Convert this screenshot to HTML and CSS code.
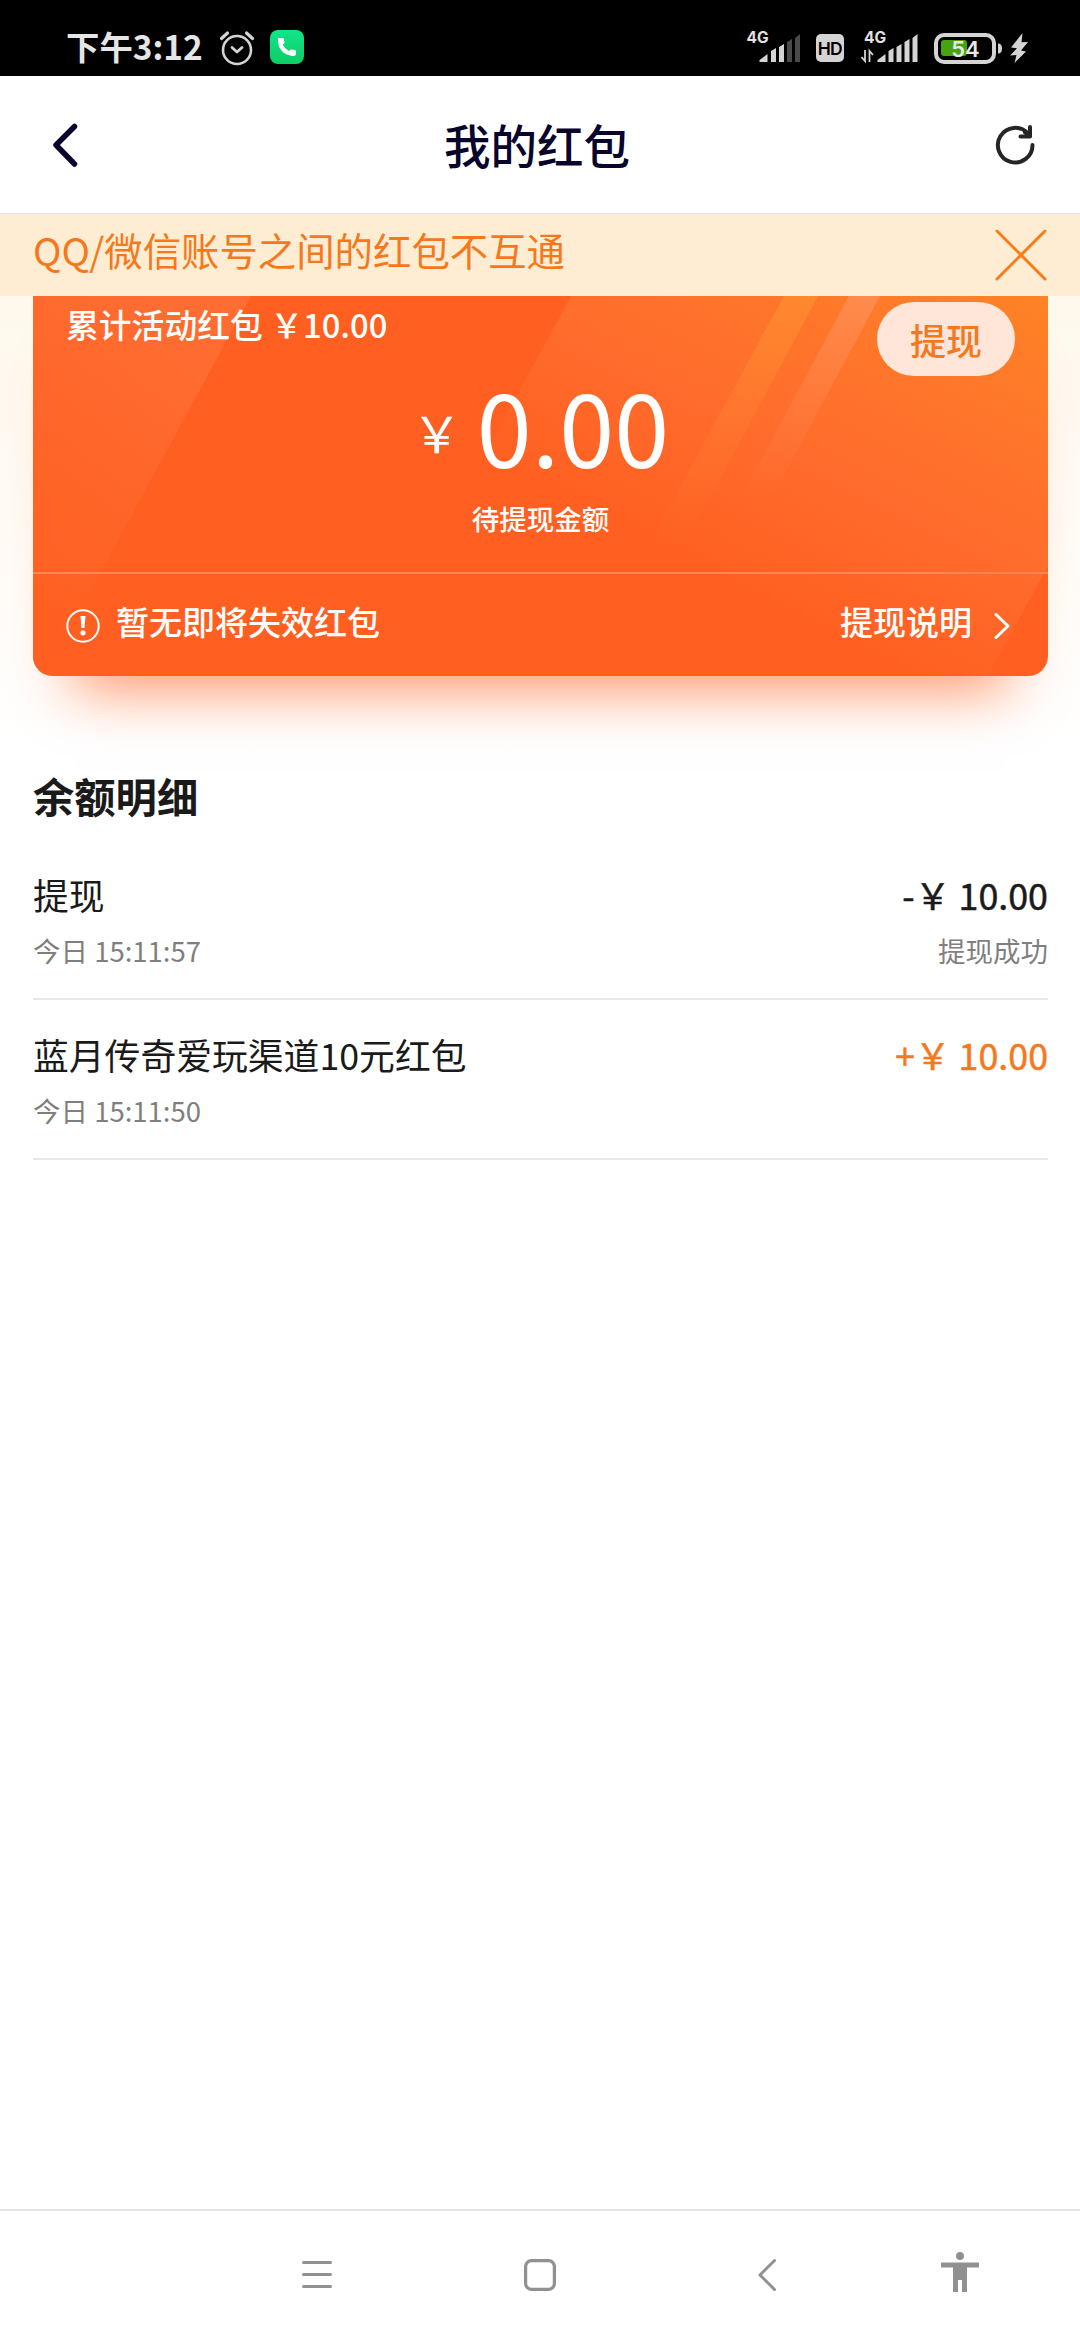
FILE: index.html
```html
<!DOCTYPE html>
<html lang="zh-CN">
<head>
<meta charset="utf-8">
<title>我的红包</title>
<link rel="stylesheet" href="styles.css">
</head>
<body>
<div class="screen">
  <div class="status">
    <span class="clock">下午3:12</span>
    <svg class="alarm" width="36" height="36" viewBox="0 0 36 36" fill="none" stroke="#d4d4d4" stroke-linecap="round"><circle cx="18" cy="20" r="14" stroke-width="2.6"/><path d="M2.5 8.5 8.5 3M33.500 8.500 27.500 3" stroke-width="3.200"/><path d="M13 17.500 18 22 23 17.500" stroke-width="2.800" stroke-linejoin="round"/></svg>
    <svg class="call" width="34" height="34" viewBox="0 0 34 34"><defs><linearGradient id="g" x2="0" y2="1"><stop stop-color="#12e58a"/><stop offset="1" stop-color="#0ccd63"/></linearGradient></defs><rect width="34" height="34" rx="8" fill="url(#g)"/><path d="M8 8h5.500q.8 2.500 1 5l-1.800 1.500q2 4.500 6.300 6.500l1.800-1.500q3 0 5.200 1v4q-1 1.700-3.500 1.500C13 25 8 18 8 11z" fill="#fff"/></svg>
    <div class="system">
      <svg width="54" height="34" viewBox="0 0 54 34" fill="#d4d4d4"><text x="0.5" y="14" class="net">4G</text><path d="M13.500 33v-2l8-6v8zM25 33V22l5-3v14zM33 33V18l5-3v18z"/><path d="M41 33V13l5-3v23zM49 33V9l5-4v28z" fill="#4a4a4a"/></svg>
      <svg class="hd" width="28" height="28" viewBox="0 0 28 28"><rect width="28" height="28" rx="5" fill="#d4d4d4"/><text x="13.700" y="20.800" class="hd-text">HD</text></svg>
      <svg class="net2" width="58" height="34" viewBox="0 0 58 34" fill="#d4d4d4"><text x="4" y="14" class="net">4G</text><path d="M17.500 33v-2l8-6v8zM28.500 33V22l5-3v14zM36.500 33V18l5-3v18zM44.500 33V13l5-3v23zM52.500 33V9l5-4v28z"/><path d="M5 21v11l-3.500-4M9.500 33V22l3.500 4" fill="none" stroke="#d4d4d4" stroke-width="1.800"/></svg>
      <svg class="battery" width="69" height="31" viewBox="0 0 69 31"><rect x="2" y="2" width="58" height="27" rx="8" fill="none" stroke="#d4d4d4" stroke-width="4"/><rect x="7" y="7" width="26" height="16" rx="3" fill="#46a312"/><path d="M64 10.500q4 0 4 5t-4 5z" fill="#d4d4d4"/><text x="31.500" y="24" class="pct">54</text></svg>
      <svg class="bolt" width="18" height="30" viewBox="0 0 18 30"><path d="M12.500 0 1 14.500l6 .8L0 22.500l6.500-.5L4.500 30 16 18.500l-5-1L18 9l-6.500.3z" fill="#d4d4d4"/></svg>
    </div>
  </div>
  <header class="header">
    <svg width="30" height="46" viewBox="0 0 30 46" fill="none" stroke="#0a0630" stroke-width="5.500" stroke-linecap="round" stroke-linejoin="round"><path d="M24.500 4.500 6 23 24.500 42"/></svg>
    <h1>我的红包</h1>
    <svg width="42" height="42" viewBox="0 0 42 42" fill="none" stroke="#252525" stroke-width="4" stroke-linecap="round" stroke-linejoin="round"><path d="M38.500 21A17.300 17.300 0 1 1 34 9.500"/><path d="M36 3V12.500H26.500"/><path d="M31 8.500 35.500 12"/></svg>
  </header>
  <div class="notice">
    <span>QQ/微信账号之间的红包不互通</span>
    <svg width="52" height="52" viewBox="0 0 52 52" fill="none" stroke="#f77c1b" stroke-width="3" stroke-linecap="round"><path d="M2 2 50 50M50 2 2 50"/></svg>
  </div>
  <main class="content">
    <section class="card">
      <svg class="facets" width="1015" height="380" viewBox="0 0 1015 380">
        <defs>
          <linearGradient id="left" gradientUnits="userSpaceOnUse" x1="200" y1="40" x2="0" y2="300"><stop stop-color="#ff6d32"/><stop offset="1" stop-color="#ff6022"/></linearGradient>
          <linearGradient id="right" gradientUnits="userSpaceOnUse" x1="1015" y1="0" x2="800" y2="420"><stop stop-color="#fe8325"/><stop offset=".28" stop-color="#ff762b"/><stop offset=".55" stop-color="#ff6b2c"/><stop offset=".87" stop-color="#ff5f20"/></linearGradient>
          <linearGradient id="s1" x2="0" y2="1"><stop stop-color="#ff892f"/><stop offset="1" stop-color="#ff7030" stop-opacity="0"/></linearGradient>
          <linearGradient id="s2" x2="0" y2="1"><stop stop-color="#ff8b4e"/><stop offset="1" stop-color="#ff7a40" stop-opacity="0"/></linearGradient>
        </defs>
        <path d="M0 0H218L11 380H0z" fill="url(#left)"/>
        <path d="M538 0H1015V270L955 380H331z" fill="url(#right)"/>
        <path d="M751 0H785L651 250H615z" fill="url(#s1)"/>
        <path d="M816 0H847L737 205H706z" fill="url(#s2)"/>
      </svg>
      <div class="card-top">
        <span class="total">累计活动红包 &#xFFE5;10.00</span>
        <span class="withdraw">提现</span>
      </div>
      <div class="balance"><span class="yen">&#xFFE5;</span><span class="value">0.00</span></div>
      <div class="caption">待提现金额</div>
      <div class="card-foot">
        <svg class="info" width="34" height="34" viewBox="0 0 34 34" fill="none" stroke="#fff"><circle cx="17" cy="17" r="15.700" stroke-width="2"/><path d="M14.500 7h5l-1 12h-3z" fill="#fff" stroke="none"/><circle cx="17" cy="23.800" r="2.600" fill="#fff" stroke="none"/></svg>
        <span class="expire">暂无即将失效红包</span>
        <span class="rules">提现说明</span>
        <svg class="info" width="18" height="28" viewBox="0 0 18 28" fill="none" stroke="#fff" stroke-width="3" stroke-linecap="round" stroke-linejoin="round"><path d="M3 2.500 15 14 3 25.500"/></svg>
      </div>
    </section>
    <section class="details">
      <h2>余额明细</h2>
      <div class="row">
        <div><div class="name">提现</div><div class="meta">今日 15:11:57</div></div>
        <div class="end"><div class="name amount">-&#xFFE5; 10.00</div><div class="meta">提现成功</div></div>
      </div>
      <div class="row">
        <div><div class="name">蓝月传奇爱玩渠道10元红包</div><div class="meta">今日 15:11:50</div></div>
        <div class="end"><div class="name amount plus">+&#xFFE5; 10.00</div></div>
      </div>
    </section>
  </main>
  <nav class="nav">
    <svg class="menu" width="32" height="32" viewBox="0 0 32 32" stroke="#919191" stroke-width="3" stroke-linecap="round"><path d="M2.500 4.500h27M2.500 16.500h27M2.500 28.500h27"/></svg>
    <svg class="home" width="32" height="32" viewBox="0 0 32 32" fill="none" stroke="#919191" stroke-width="3.200"><rect x="1.600" y="1.600" width="28.800" height="28.800" rx="6"/></svg>
    <svg class="back" width="20" height="34" viewBox="0 0 20 34" fill="none" stroke="#919191" stroke-width="3" stroke-linecap="round" stroke-linejoin="round"><path d="M17.500 2.500 3 17 17.500 31.500"/></svg>
    <svg class="person" width="38" height="40" viewBox="0 0 38 40" fill="#919191"><circle cx="19" cy="4" r="4"/><path d="M0 10.500h38v5H26V40h-5V28h-4v12h-5V15.500H0z"/></svg>
  </nav>
</div>
</body>
</html>
```

FILE: styles.css
```css
* { box-sizing: border-box; }
body { margin: 0; background: #fff; font-family: "Noto Sans CJK SC", sans-serif; }
svg { display: block; flex: none; overflow: visible; }
h1, h2 { margin: 0; }
.screen { width: 1080px; height: 2340px; display: flex; flex-direction: column; overflow: hidden; }

.status { height: 76px; flex: none; background: #000; display: flex; align-items: flex-start; padding: 0 52px 0 66px; color: #e6e6e6; }
.clock { font-size: 33.4px; line-height: 40px; font-weight: 700; margin-top: 26px; width: 153px; white-space: nowrap; }
.alarm { margin-top: 30px; }
.call { margin: 30px 0 0 15px; }
.system { margin: 29px 0 0 auto; display: flex; align-items: flex-start; }
.net { font: 700 15.5px Inter, sans-serif; fill: #e2e2e2; }
.hd { margin: 5px 0 0 16px; }
.hd-text { font: 600 17.5px Inter, sans-serif; letter-spacing: -0.8px; text-anchor: middle; fill: #000; }
.net2 { margin-left: 16px; }
.battery { margin: 4px 0 0 16px; }
.pct { font: 600 22px Inter, sans-serif; text-anchor: middle; fill: #e8e8e8; }
.bolt { margin: 4px 0 0 7px; }

.header { height: 138px; flex: none; display: flex; align-items: center; justify-content: space-between; padding: 0 44px 0 50px; border-bottom: 1px solid #e6e8e8; }
.header h1 { font-size: 46.5px; line-height: 60px; font-weight: 500; color: #08042c; padding-bottom: 2px; }

.notice { height: 82px; flex: none; background: #ffedd3; display: flex; align-items: center; justify-content: space-between; padding: 0 33px; color: #f5791c; font-size: 38.4px; line-height: 50px; }
.notice span { padding-bottom: 13px; }

.content { flex: 1; padding: 0 32px 0 33px; background: linear-gradient(#fff8ec, #fff 460px); }
.card { position: relative; height: 380px; background: #ff5f20; border-radius: 0 0 20px 20px; color: #fff; display: flex; flex-direction: column; box-shadow: 0 56px 54px -42px rgba(255, 95, 32, .62), 0 30px 60px -20px rgba(255, 95, 32, .06); }
.facets { position: absolute; inset: 0; border-radius: 0 0 20px 20px; overflow: hidden; }
.card > div { position: relative; }
.card-top { height: 74px; padding: 6px 33px 0; display: flex; justify-content: space-between; align-items: flex-start; }
.total { font-size: 32.8px; line-height: 44px; font-weight: 500; }
.withdraw { width: 138px; height: 74px; border-radius: 37px; background: #ffe6d8; color: #f5791c; font-size: 36px; font-weight: 500; line-height: 74px; text-align: center; }
.balance { height: 110px; display: flex; justify-content: center; align-items: baseline; gap: 15px; line-height: 110px; }
.yen { font-size: 50px; position: relative; top: -15px; }
.value { font-size: 99px; }
.caption { font-size: 27.5px; line-height: 40px; font-weight: 500; text-align: center; margin-top: 18px; }
.card-foot { margin-top: auto; height: 104px; border-top: 2px solid #ff8555; padding: 0 37px 2px 33px; display: flex; align-items: center; font-size: 33px; line-height: 48px; font-weight: 500; }
.info { margin-top: 3px; }
.expire { margin-left: 16px; padding-bottom: 6px; }
.rules { margin-left: auto; margin-right: 21px; padding-bottom: 6px; }

.details { padding-top: 89px; }
.details h2 { font-size: 41.3px; line-height: 60px; color: #1a1a1a; }
.row { height: 160px; border-bottom: 2px solid #e8e8e8; display: flex; justify-content: space-between; padding-top: 28px; }
.details h2 + .row { margin-top: 15px; }
.name { font-size: 35.8px; line-height: 52px; color: #1a1a1a; }
.amount { -webkit-text-stroke: .5px currentColor; }
.meta { font-size: 27.5px; line-height: 40px; color: #7f7f7f; margin-top: 10px; }
.end { text-align: right; }
.plus { color: #f5791c; }

.nav { height: 131px; flex: none; border-top: 2px solid #e4e4e4; display: flex; align-items: flex-start; padding-left: 301px; background: #fff; }
.menu { margin-top: 47px; }
.home { margin: 48px 0 0 191px; }
.back { margin: 47px 0 0 201px; }
.person { margin: 41px 0 0 164px; }
```
